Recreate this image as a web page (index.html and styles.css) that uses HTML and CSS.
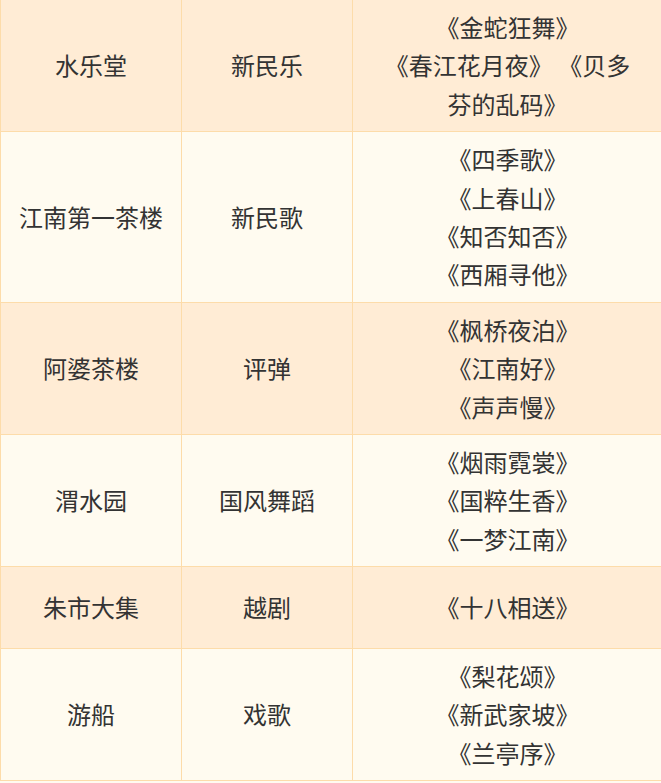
FILE: index.html
```html
<!DOCTYPE html>
<html lang="zh-CN">
<head>
<meta charset="utf-8">
<title>演出安排</title>
<link rel="stylesheet" href="styles.css">
</head>
<body>
<table class="schedule">
  <colgroup>
    <col class="col-venue">
    <col class="col-type">
    <col class="col-show">
  </colgroup>
  <tbody>
    <tr class="row-warm">
      <td>水乐堂</td>
      <td>新民乐</td>
      <td class="shows">《金蛇狂舞》<br>《春江花月夜》 《贝多芬的乱码》</td>
    </tr>
    <tr class="row-light">
      <td>江南第一茶楼</td>
      <td>新民歌</td>
      <td class="shows">《四季歌》<br>《上春山》<br>《知否知否》<br>《西厢寻他》</td>
    </tr>
    <tr class="row-warm">
      <td>阿婆茶楼</td>
      <td>评弹</td>
      <td class="shows">《枫桥夜泊》<br>《江南好》<br>《声声慢》</td>
    </tr>
    <tr class="row-light">
      <td>渭水园</td>
      <td>国风舞蹈</td>
      <td class="shows">《烟雨霓裳》<br>《国粹生香》<br>《一梦江南》</td>
    </tr>
    <tr class="row-warm">
      <td>朱市大集</td>
      <td>越剧</td>
      <td class="shows">《十八相送》</td>
    </tr>
    <tr class="row-light">
      <td>游船</td>
      <td>戏歌</td>
      <td class="shows">《梨花颂》<br>《新武家坡》<br>《兰亭序》</td>
    </tr>
  </tbody>
</table>
</body>
</html>
```

FILE: styles.css
```css
html, body {
  margin: 0;
  padding: 0;
  overflow: hidden;
  background: #fffbf0;
}

.schedule {
  border-collapse: collapse;
  width: 662px;
  margin-top: -1px;
  table-layout: fixed;
  font-family: "Noto Sans CJK SC", "Noto Sans", sans-serif;
  font-size: 24px;
  line-height: 1.6;
  color: #333333;
}

.col-venue { width: 181px; }
.col-type { width: 171px; }
.col-show { width: 310px; }

.schedule td {
  border: 1px solid #fddcaa;
  padding: 8px 6px;
  height: 65px;
  text-align: center;
  vertical-align: middle;
}

.schedule td.shows {
  padding: 8px 24px;
}

.row-warm td { background: #ffecd5; }
.row-light td { background: #fffbf0; }
```
